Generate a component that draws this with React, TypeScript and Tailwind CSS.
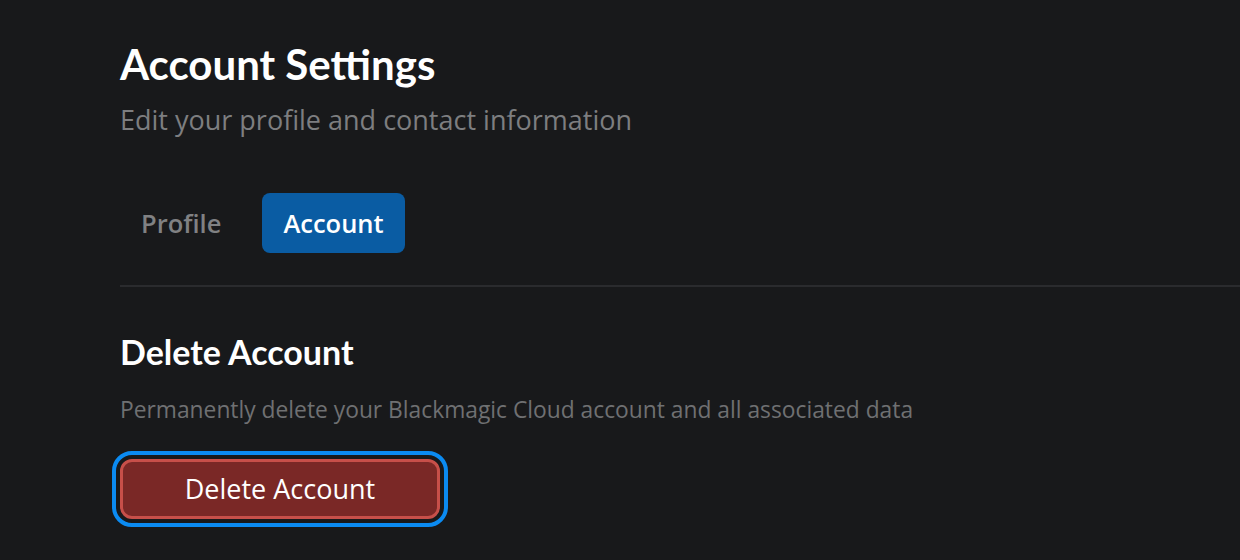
import React from "react";

export default function App() {
  return (
    <div className="w-[1240px] h-[560px] bg-[#18191b] overflow-hidden pl-[120px] pt-[38px] font-['Open_Sans','Noto_Sans',sans-serif]">
      <h1 className="font-['Lato','Noto_Sans',sans-serif] text-[42px] leading-[52px] font-bold text-white">
        Account Settings
      </h1>
      <p className="mt-[12px] text-[27px] leading-[36px] text-[#7d7e80]">
        Edit your profile and contact information
      </p>
      <div className="mt-[55px] flex items-center gap-[20px]">
        <button className="h-[60px] px-[21px] rounded-[8px] text-[25.5px] font-semibold text-[#808183]">
          Profile
        </button>
        <button className="h-[60px] px-[21px] rounded-[8px] text-[25.5px] font-semibold text-white bg-[#0a5ca3]">
          Account
        </button>
      </div>
      <div className="mt-[32px] h-[2px] bg-[#2a2b2e]" />
      <h2 className="mt-[43px] font-['Lato','Noto_Sans',sans-serif] text-[34px] leading-[44px] font-bold text-white">
        Delete Account
      </h2>
      <p className="mt-[21px] text-[22.8px] leading-[30px] text-[#6f7072]">
        Permanently delete your Blackmagic Cloud account and all associated data
      </p>
      <button className="mt-[34px] w-[320px] h-[60px] rounded-[12px] border-[3px] border-[#c74f49] bg-[#7a2826] text-white text-[27px] outline-[4px] outline-solid outline-[#0b8bf2] outline-offset-[4px]">
        Delete Account
      </button>
    </div>
  );
}
